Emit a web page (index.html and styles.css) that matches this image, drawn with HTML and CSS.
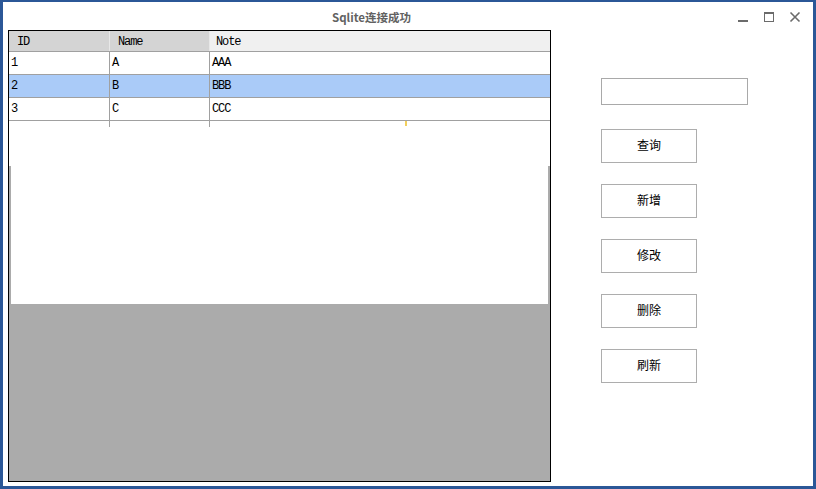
FILE: index.html
```html
<!DOCTYPE html>
<html lang="zh-CN">
<head>
    <meta charset="UTF-8">
    <title>Sqlite连接成功</title>
    <link rel="stylesheet" href="styles.css">
</head>
<body>
    <div class="window">
        <div class="titlebar">
            <span class="title">Sqlite连接成功</span>
            <div class="controls">
                <svg class="ctl" width="12" height="12" viewBox="0 0 12 12"><rect x="1" y="9" width="10" height="2" fill="#6b6b6b"/></svg>
                <svg class="ctl" width="12" height="12" viewBox="0 0 12 12"><rect x="1.5" y="1.5" width="9" height="9" fill="none" stroke="#6b6b6b"/><rect x="1" y="1" width="10" height="2" fill="#6b6b6b"/></svg>
                <svg class="ctl" width="12" height="12" viewBox="0 0 12 12"><path d="M1.5 1.5 L10.5 10.5 M10.5 1.5 L1.5 10.5" stroke="#6b6b6b" stroke-width="1.6"/></svg>
            </div>
        </div>

        <div class="main">
            <div class="grid">
                <div class="row header">
                    <div class="cell">ID</div>
                    <div class="cell">Name</div>
                    <div class="cell">Note</div>
                </div>
                <div class="row">
                    <div class="cell">1</div>
                    <div class="cell">A</div>
                    <div class="cell">AAA</div>
                </div>
                <div class="row selected">
                    <div class="cell">2</div>
                    <div class="cell">B</div>
                    <div class="cell">BBB</div>
                </div>
                <div class="row">
                    <div class="cell">3</div>
                    <div class="cell">C</div>
                    <div class="cell">CCC</div>
                </div>
                <div class="row stub">
                    <div class="cell"></div>
                    <div class="cell"></div>
                    <div class="cell"><span class="caret"></span></div>
                </div>
                <div class="blank-top"></div>
                <div class="blank"></div>
            </div>

            <div class="side">
                <input type="text" class="search">
                <button class="btn">查询</button>
                <button class="btn">新增</button>
                <button class="btn">修改</button>
                <button class="btn">删除</button>
                <button class="btn">刷新</button>
            </div>
        </div>
    </div>
</body>
</html>
```

FILE: styles.css
```css
body {
    margin: 0;
    background: #ffffff;
}
.window {
    width: 816px;
    height: 489px;
    box-sizing: border-box;
    border: 3px solid #2b5797;
    border-top-width: 2px;
    background: #ffffff;
    display: flex;
    flex-direction: column;
}
.titlebar {
    height: 28px;
    flex: none;
    display: flex;
    align-items: center;
}
.title {
    margin-left: 329px;
    margin-top: 1px;
    font-family: "Noto Sans CJK SC", "Open Sans", sans-serif;
    font-size: 11.5px;
    font-weight: bold;
    color: #626262;
}
.controls {
    margin-left: auto;
    margin-right: 12px;
    display: flex;
    gap: 14px;
    margin-top: 2px;
}
.ctl {
    display: block;
}
.main {
    flex: 1;
    display: flex;
    padding-left: 5px;
    padding-bottom: 5px;
}
.grid {
    width: 543px;
    height: 452px;
    box-sizing: border-box;
    border: 1px solid #000000;
    background: #ababab;
    display: flex;
    flex-direction: column;
}
.row {
    display: flex;
    height: 23px;
    background: #ffffff;
    border-bottom: 1px solid #a0a0a0;
    box-sizing: border-box;
    flex: none;
}
.cell {
    width: 100px;
    box-sizing: border-box;
    border-right: 1px solid #a0a0a0;
    padding-left: 2px;
    padding-top: 1px;
    font-family: "Liberation Mono", monospace;
    font-size: 12px;
    letter-spacing: -1.1px;
    line-height: 21px;
    color: #000000;
}
.cell:first-child {
    width: 101px;
}
.cell:last-child {
    flex: 1;
    border-right: none;
}
.header {
    height: 21px;
}
.header .cell {
    background: #d4d4d4;
    line-height: 18px;
    padding-top: 2px;
    padding-left: 8px;
    border-right-color: #e8e8e8;
}
.header .cell:last-child {
    background: #f0f0f0;
    padding-left: 6px;
}
.selected {
    background: #aacbf8;
}
.stub {
    height: 6px;
    border-bottom: none;
}
.stub .cell {
    position: relative;
}
.caret {
    position: absolute;
    left: 195px;
    top: 0;
    width: 2px;
    height: 5px;
    background: #f2cf5b;
}
.blank-top {
    height: 39px;
    background: #ffffff;
    flex: none;
}
.blank {
    height: 138px;
    margin: 0 2px;
    background: #ffffff;
    flex: none;
}
.side {
    margin-left: 50px;
    padding-top: 48px;
    display: flex;
    flex-direction: column;
    align-items: flex-start;
}
.search {
    width: 147px;
    height: 27px;
    box-sizing: border-box;
    border: 1px solid #a9a9a9;
    margin: 0 0 24px 0;
    padding: 0;
    outline: none;
}
.btn {
    width: 96px;
    height: 34px;
    box-sizing: border-box;
    border: 1px solid #adadad;
    background: #ffffff;
    margin: 0 0 21px 0;
    padding: 0 0 3px 0;
    font-family: "Noto Sans CJK SC", sans-serif;
    font-size: 12px;
    color: #000000;
}
```
